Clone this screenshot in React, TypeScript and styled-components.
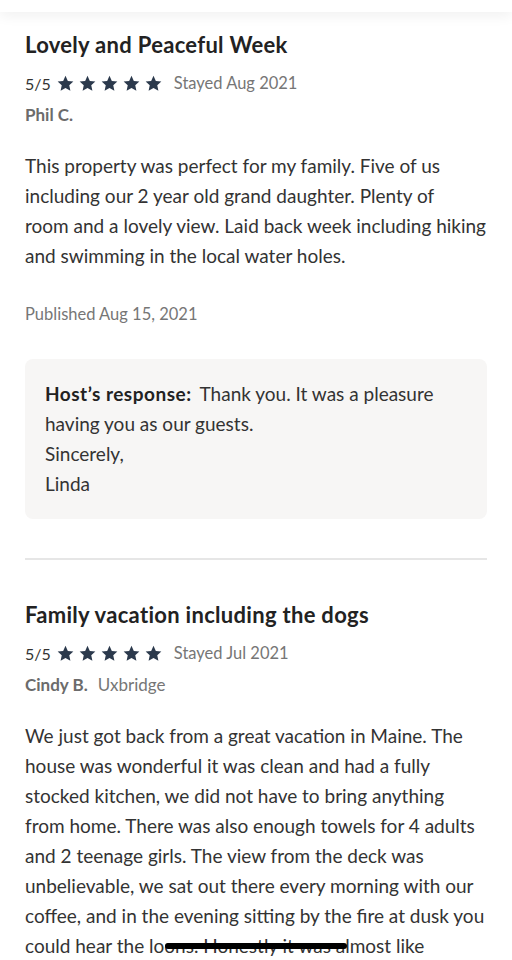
import styled, { createGlobalStyle } from "styled-components";

const GlobalStyle = createGlobalStyle`
  html, body {
    margin: 0;
    padding: 0;
    background: #ffffff;
  }
  body {
    font-family: Lato, "Open Sans", "Liberation Sans", sans-serif;
    color: #333333;
  }
`;

interface Review {
  title: string;
  rating: number;
  stayed: string;
  author: string;
  location?: string;
  body: string;
  published?: string;
  response?: string[];
}

// "\n" keeps the wrap the way the app shows it
const reviews: Review[] = [
  {
    title: "Lovely and Peaceful Week",
    rating: 5,
    stayed: "Stayed Aug 2021",
    author: "Phil C.",
    body: "This property was perfect for my family. Five of us including our 2 year old grand daughter. Plenty of\nroom and a lovely view. Laid back week including hiking and swimming in the local water holes.",
    published: "Published Aug 15, 2021",
    response: [
      "Thank you. It was a pleasure having you as our guests.",
      "Sincerely,",
      "Linda",
    ],
  },
  {
    title: "Family vacation including the dogs",
    rating: 5,
    stayed: "Stayed Jul 2021",
    author: "Cindy B.",
    location: "Uxbridge",
    body: "We just got back from a great vacation in Maine. The house was wonderful it was clean and had a fully stocked kitchen, we did not have to bring anything from home. There was also enough towels for 4 adults and 2 teenage girls. The view from the deck was unbelievable, we sat out there every morning with our coffee, and in the evening sitting by the fire at dusk you could hear the loons. Honestly it was almost like stepping back in time.",
  },
];

const Screen = styled.div`
  width: 512px;
  height: 960px;
  overflow: hidden;
  position: relative;
  background: #ffffff;
`;

const TopBar = styled.div`
  height: 12px;
  background: #ffffff;
  box-shadow: 0 3px 14px rgba(0, 0, 0, 0.07);
  position: relative;
  z-index: 1;
`;

const List = styled.div`
  padding: 19px 25px 0;
  display: flex;
  flex-direction: column;
`;

const Card = styled.article`
  display: flex;
  flex-direction: column;
`;

const Title = styled.h3`
  margin: 0;
  font-size: 22px;
  line-height: 28px;
  font-weight: 700;
  letter-spacing: 0.3px;
  color: #222222;
`;

const RatingRow = styled.div`
  margin-top: 12px;
  height: 24px;
  display: flex;
  align-items: center;
`;

const Score = styled.span`
  font-size: 16px;
  color: #333333;
  margin-right: 6px;
`;

const Stars = styled.div`
  display: flex;
  gap: 5px;
  margin-right: 12px;
`;

const Stayed = styled.span`
  font-size: 16.5px;
  color: #767676;
`;

const AuthorRow = styled.div`
  margin-top: 9px;
  display: flex;
  gap: 10px;
  font-size: 17px;
  line-height: 22px;
`;

const AuthorName = styled.span`
  font-weight: 700;
  color: #6b6b6b;
`;

const Location = styled.span`
  color: #767676;
`;

const Body = styled.p`
  margin: 25px 0 0;
  font-size: 19px;
  line-height: 30px;
  color: #333333;
  white-space: pre-line;
`;

const Published = styled.div`
  margin-top: 32px;
  font-size: 16.5px;
  line-height: 22px;
  color: #767676;
`;

const ResponseBox = styled.div`
  margin-top: 34px;
  padding: 20px 20px 20px;
  background: #f7f6f5;
  border-radius: 8px;
  font-size: 19px;
  line-height: 30px;
  color: #333333;
`;

const ResponseLabel = styled.strong`
  font-weight: 700;
  letter-spacing: 0.5px;
  color: #222222;
  margin-right: 8px;
`;

const Divider = styled.hr`
  margin: 39px 0 41px;
  border: none;
  height: 2px;
  background: #e6e6e6;
`;

const HomeIndicator = styled.div`
  position: absolute;
  left: 165px;
  bottom: 11px;
  width: 182px;
  height: 6px;
  border-radius: 3px;
  background: #000000;
`;

function Star() {
  return (
    <svg width="17" height="17" viewBox="0 0 24 24" aria-hidden="true">
      <path
        fill="#2b394c"
        d="M12 1.2l3.3 7.1 7.8.8-5.8 5.3 1.6 7.7L12 18.2 5.1 22.1l1.6-7.7L.9 9.1l7.8-.8z"
      />
    </svg>
  );
}

function ReviewCard({ review }: { review: Review }) {
  return (
    <Card>
      <Title>{review.title}</Title>
      <RatingRow>
        <Score>{review.rating}/5</Score>
        <Stars>
          {Array.from({ length: review.rating }).map((_, i) => (
            <Star key={i} />
          ))}
        </Stars>
        <Stayed>{review.stayed}</Stayed>
      </RatingRow>
      <AuthorRow>
        <AuthorName>{review.author}</AuthorName>
        {review.location ? <Location>{review.location}</Location> : null}
      </AuthorRow>
      <Body>{review.body}</Body>
      {review.published ? <Published>{review.published}</Published> : null}
      {review.response ? (
        <ResponseBox>
          <ResponseLabel>Host’s response:</ResponseLabel>
          {review.response[0]}
          {review.response.slice(1).map((line) => (
            <div key={line}>{line}</div>
          ))}
        </ResponseBox>
      ) : null}
    </Card>
  );
}

export default function App() {
  return (
    <Screen>
      <GlobalStyle />
      <TopBar />
      <List>
        {reviews.map((r, i) => (
          <div key={r.title}>
            {i > 0 ? <Divider /> : null}
            <ReviewCard review={r} />
          </div>
        ))}
      </List>
      <HomeIndicator />
    </Screen>
  );
}
